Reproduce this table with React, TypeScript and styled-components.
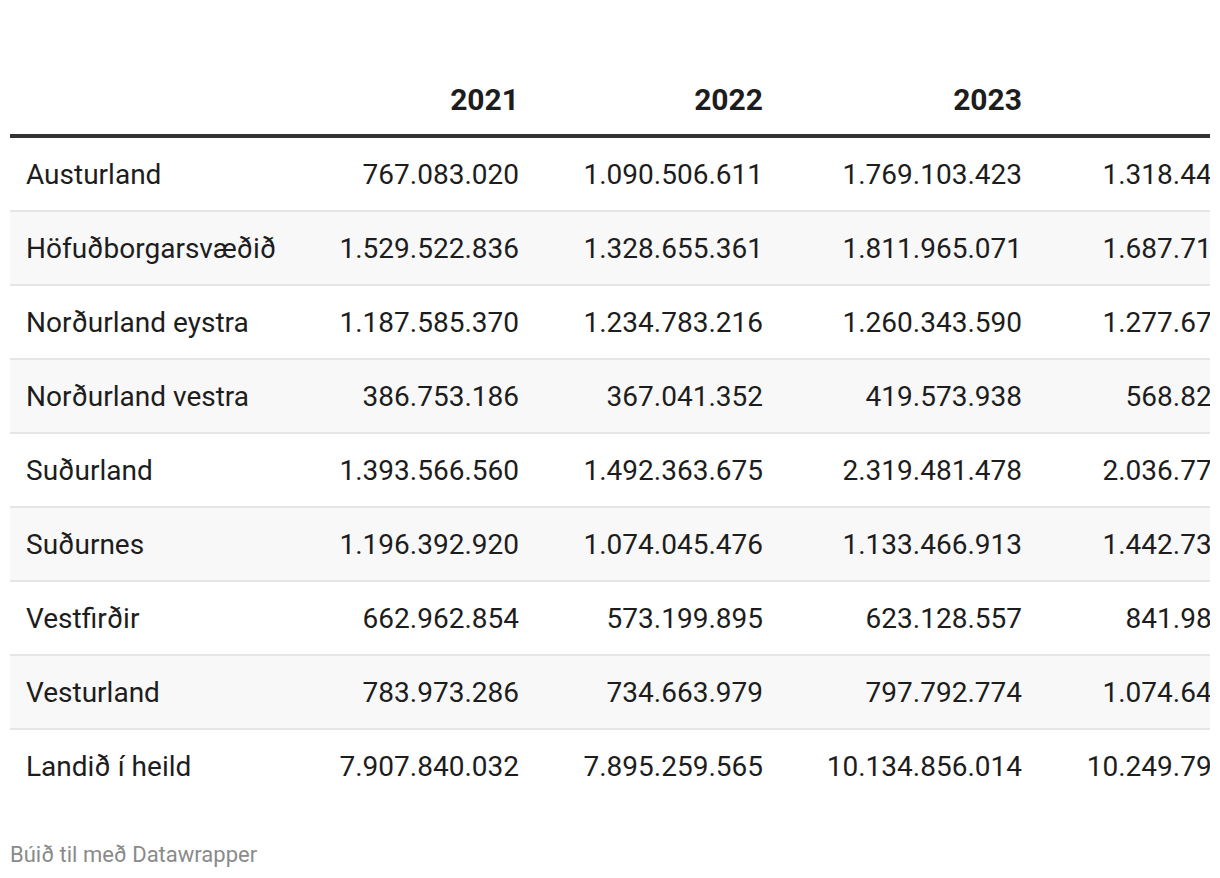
import React from 'react';
import styled, { createGlobalStyle } from 'styled-components';

const GlobalStyle = createGlobalStyle`
  html, body {
    margin: 0;
    padding: 0;
    background: #ffffff;
  }
  body {
    font-family: Roboto, "Liberation Sans", Arial, sans-serif;
    color: #1d1d1d;
  }
`;

const Page = styled.main`
  padding: 67px 10px 0;
  width: 1200px;
`;

const TableWrap = styled.div`
  width: 1200px;
  overflow: hidden;
`;

const Table = styled.table`
  border-collapse: collapse;
  table-layout: fixed;
  width: 1272px;
  font-size: 28px;
  line-height: 33px;
`;

const HeadCell = styled.th<{ $first?: boolean }>`
  font-weight: 700;
  font-size: 30px;
  text-align: ${(p) => (p.$first ? 'left' : 'right')};
  padding: 16px 0 18px ${(p) => (p.$first ? '16px' : '0')};
  border-bottom: 4px solid #333333;
  color: #1d1d1d;
`;

const Row = styled.tr<{ $striped: boolean; $last: boolean }>`
  background: ${(p) => (p.$striped ? '#f8f8f8' : '#ffffff')};
  border-bottom: ${(p) => (p.$last ? 'none' : '2px solid #e6e6e6')};
`;

const LabelCell = styled.td`
  height: 72px;
  text-align: left;
  padding: 0 0 0 16px;
  white-space: nowrap;
`;

const NumCell = styled.td`
  height: 72px;
  text-align: right;
  padding: 0;
  white-space: nowrap;
`;

const Footer = styled.div`
  margin-top: 40px;
  font-size: 22px;
  line-height: 26px;
  color: #8a8a8a;
`;

const years = ['2021', '2022', '2023', '2024'];

const rows: [string, string[]][] = [
  ['Austurland', ['767.083.020', '1.090.506.611', '1.769.103.423', '1.318.443.000']],
  ['Höfuðborgarsvæðið', ['1.529.522.836', '1.328.655.361', '1.811.965.071', '1.687.713.000']],
  ['Norðurland eystra', ['1.187.585.370', '1.234.783.216', '1.260.343.590', '1.277.675.000']],
  ['Norðurland vestra', ['386.753.186', '367.041.352', '419.573.938', '568.823.000']],
  ['Suðurland', ['1.393.566.560', '1.492.363.675', '2.319.481.478', '2.036.772.000']],
  ['Suðurnes', ['1.196.392.920', '1.074.045.476', '1.133.466.913', '1.442.736.000']],
  ['Vestfirðir', ['662.962.854', '573.199.895', '623.128.557', '841.983.000']],
  ['Vesturland', ['783.973.286', '734.663.979', '797.792.774', '1.074.644.000']],
  ['Landið í heild', ['7.907.840.032', '7.895.259.565', '10.134.856.014', '10.249.790.000']],
];

// last column runs past the visible edge, as in the original
const colWidths = [280, 229, 244, 259, 260];

export default function App() {
  return (
    <>
      <GlobalStyle />
      <Page>
        <TableWrap>
          <Table>
            <colgroup>
              {colWidths.map((w, i) => (
                <col key={i} style={{ width: w }} />
              ))}
            </colgroup>
            <thead>
              <tr>
                <HeadCell $first />
                {years.map((y) => (
                  <HeadCell key={y}>{y}</HeadCell>
                ))}
              </tr>
            </thead>
            <tbody>
              {rows.map(([label, values], i) => (
                <Row key={label} $striped={i % 2 === 1} $last={i === rows.length - 1}>
                  <LabelCell>{label}</LabelCell>
                  {values.map((v, j) => (
                    <NumCell key={j}>{v}</NumCell>
                  ))}
                </Row>
              ))}
            </tbody>
          </Table>
        </TableWrap>
        <Footer>Búið til með Datawrapper</Footer>
      </Page>
    </>
  );
}
